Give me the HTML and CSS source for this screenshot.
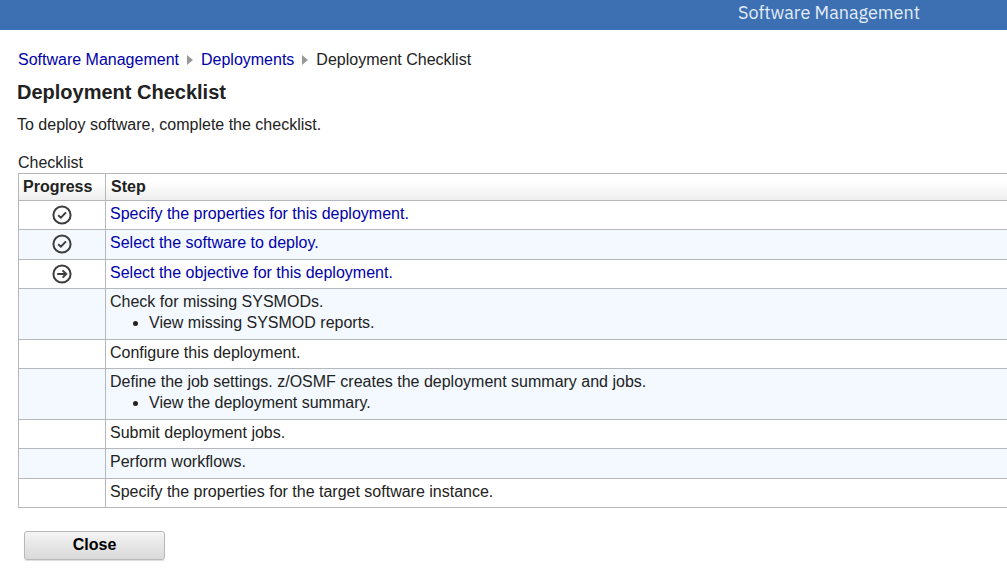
FILE: index.html
```html
<!DOCTYPE html>
<html lang="en">
<head>
<meta charset="utf-8">
<title>Deployment Checklist</title>
<link rel="stylesheet" href="styles.css">
</head>
<body>
<header class="banner">Software Management</header>
<main class="page">
  <nav class="crumbs" aria-label="Breadcrumb">
    <a href="#">Software Management</a>
    <svg class="crumb-arrow" viewBox="0 0 6 10" aria-hidden="true"><path d="M0 0L6 5L0 10Z"/></svg>
    <a href="#">Deployments</a>
    <svg class="crumb-arrow" viewBox="0 0 6 10" aria-hidden="true"><path d="M0 0L6 5L0 10Z"/></svg>
    <span>Deployment Checklist</span>
  </nav>
  <h1 class="title">Deployment Checklist</h1>
  <p class="intro">To deploy software, complete the checklist.</p>
  <div class="table-area">
    <div class="caption" id="checklist-name">Checklist</div>
    <table class="checklist" aria-labelledby="checklist-name">
      <thead>
        <tr><th class="progress" scope="col">Progress</th><th scope="col">Step</th></tr>
      </thead>
      <tbody>
        <tr>
          <td class="status"><svg class="icon" viewBox="0 0 20 20" role="img" aria-label="Complete"><circle cx="10" cy="10" r="8.6"/><path d="M6.2 10.3L8.9 12.7L14 7.4"/></svg></td>
          <td><a href="#">Specify the properties for this deployment.</a></td>
        </tr>
        <tr>
          <td class="status"><svg class="icon" viewBox="0 0 20 20" role="img" aria-label="Complete"><circle cx="10" cy="10" r="8.6"/><path d="M6.2 10.3L8.9 12.7L14 7.4"/></svg></td>
          <td><a href="#">Select the software to deploy.</a></td>
        </tr>
        <tr>
          <td class="status"><svg class="icon" viewBox="0 0 20 20" role="img" aria-label="Next step"><circle cx="10" cy="10" r="8.6"/><path d="M5.2 10H14M10.6 6.4L14.2 10L10.6 13.6"/></svg></td>
          <td><a href="#">Select the objective for this deployment.</a></td>
        </tr>
        <tr><td></td><td>Check for missing SYSMODs.<ul class="substeps"><li>View missing SYSMOD reports.</li></ul></td></tr>
        <tr><td></td><td>Configure this deployment.</td></tr>
        <tr><td></td><td>Define the job settings. z/OSMF creates the deployment summary and jobs.<ul class="substeps"><li>View the deployment summary.</li></ul></td></tr>
        <tr><td></td><td>Submit deployment jobs.</td></tr>
        <tr><td></td><td>Perform workflows.</td></tr>
        <tr><td></td><td>Specify the properties for the target software instance.</td></tr>
      </tbody>
    </table>
  </div>
  <button class="close" type="button">Close</button>
</main>
</body>
</html>
```

FILE: styles.css
```css
* {
  box-sizing: border-box;
}

body {
  margin: 0;
  background: #fff;
  color: #222;
  font: 16px/21px "Liberation Sans", Arial, sans-serif;
}

a {
  color: #00a;
  text-decoration: none;
}

.banner {
  padding: 0 87px 4px 0;
  background: #3c70b2;
  color: #e3ecf8;
  font: 18px/26px "IBM Plex Sans", "Noto Sans", sans-serif;
  text-align: right;
}

.page {
  padding: 19px 0 24px 17px;
}

.crumbs {
  display: flex;
  align-items: center;
  gap: 8px;
  padding-left: 1px;
}

.crumb-arrow {
  width: 6px;
  height: 10px;
  fill: #999;
}

.title {
  margin: 10px 0;
  font-size: 20px;
  line-height: 24px;
}

.intro {
  margin: 0 0 17px;
}

.table-area {
  padding-left: 1px;
}

.checklist {
  width: 100%;
  border-collapse: separate;
  border-spacing: 0;
}

.checklist th,
.checklist td {
  padding: 2px 4px 5px;
  border-bottom: 1px solid #b5b8bb;
  text-align: left;
  vertical-align: top;
}

.checklist th {
  padding: 2px 5px 3px;
  border-top: 1px solid #b5b8bb;
  background: linear-gradient(#fff 30%, #eee);
}

.checklist th:first-child,
.checklist td:first-child {
  border-right: 1px solid #b5b8bb;
  border-left: 1px solid #b5b8bb;
}

.checklist .progress {
  width: 88px;
  padding-right: 0;
  padding-left: 4px;
}

.checklist tbody tr:nth-child(even) td {
  padding-bottom: 6px;
  background: #f3f9ff;
}

.checklist tbody .status,
.checklist tbody tr:nth-child(even) .status {
  padding: 4px 0 0;
}

.icon {
  display: block;
  width: 20px;
  height: 20px;
  margin: 0 auto;
  fill: none;
  stroke: #3d3d3d;
  stroke-width: 2;
}

.substeps {
  margin: 0;
  padding-left: 39px;
}

.close {
  display: block;
  width: 141px;
  height: 29px;
  margin: 23px 0 0 7px;
  padding: 0 0 2px;
  border: 1px solid #b8b8b8;
  border-radius: 3px;
  background: linear-gradient(#f4f4f4, #d9d9d9);
  box-shadow: 0 1px 1px #ddd;
  color: #000;
  font: bold 16px/21px "Liberation Sans", Arial, sans-serif;
}
```
